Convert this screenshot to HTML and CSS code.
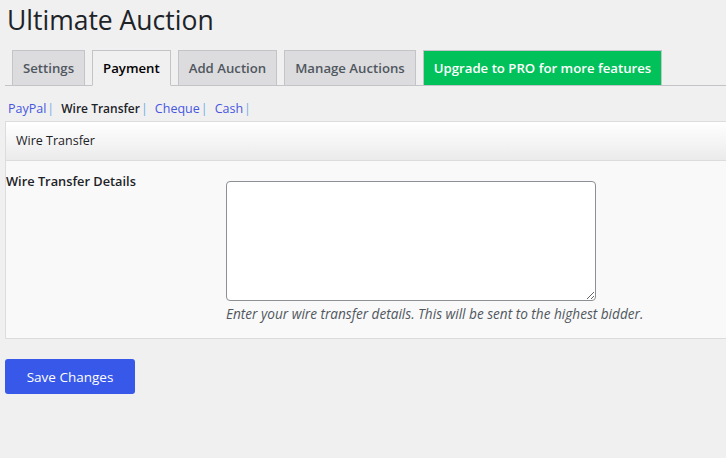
FILE: index.html
```html
<!DOCTYPE html>
<html lang="en">
<head>
<meta charset="utf-8">
<title>Ultimate Auction</title>
<link rel="stylesheet" href="styles.css">
</head>
<body>
<div class="wrap">
  <h1 class="page-title">Ultimate Auction</h1>

  <nav class="nav-tabs">
    <a class="nav-tab" href="#">Settings</a>
    <a class="nav-tab nav-tab-active" href="#">Payment</a>
    <a class="nav-tab" href="#">Add Auction</a>
    <a class="nav-tab" href="#">Manage Auctions</a>
    <a class="nav-tab nav-tab-pro" href="#">Upgrade to PRO for more features</a>
  </nav>

  <ul class="subsubsub">
    <li><a href="#">PayPal</a><span class="sep">|</span></li>
    <li><a class="current" href="#">Wire Transfer</a><span class="sep">|</span></li>
    <li><a href="#">Cheque</a><span class="sep">|</span></li>
    <li><a href="#">Cash</a><span class="sep">|</span></li>
  </ul>

  <form class="settings-form">
    <section class="panel">
      <header class="panel-head">Wire Transfer</header>
      <div class="panel-body">
        <div class="field-row">
          <label class="field-label" for="wire-details">Wire Transfer Details</label>
          <div class="field-control">
            <textarea id="wire-details" class="field-textarea"></textarea>
            <p class="field-desc">Enter your wire transfer details. This will be sent to the highest bidder.</p>
          </div>
        </div>
      </div>
    </section>

    <div class="submit-row">
      <button type="button" class="button-primary">Save Changes</button>
    </div>
  </form>
</div>
</body>
</html>
```

FILE: styles.css
```css
html {
  overflow-x: hidden;
}

body {
  margin: 0;
  background: #f0f0f1;
  color: #1d2327;
  font-family: "Open Sans", "Noto Sans", sans-serif;
  font-size: 13px;
}

.wrap {
  padding-left: 5px;
}

.page-title {
  margin: 0;
  padding: 2px 0 0 2px;
  font-size: 26.5px;
  font-weight: 400;
  line-height: 36px;
  color: #1d2327;
}

/* tab strip */
.nav-tabs {
  display: flex;
  margin-top: 12px;
  border-bottom: 1px solid #c3c4c7;
  margin-right: -5px;
}

.nav-tab {
  margin-left: 7px;
  margin-bottom: -1px;
  padding: 5px 10px;
  border: 1px solid #c3c4c7;
  background: #dcdcde;
  color: #50575e;
  font-size: 13.2px;
  font-weight: 600;
  line-height: 24px;
  text-decoration: none;
  white-space: nowrap;
}

.nav-tab-active {
  background: #f0f0f1;
  border-bottom-color: #f0f0f1;
  color: #000;
}

.nav-tab-pro {
  background: #00c15a;
  color: #fff;
  border-bottom-color: #c3c4c7;
}

/* payment method links */
.subsubsub {
  display: flex;
  margin: 0;
  padding: 12px 0 0 3px;
  list-style: none;
  font-size: 12.5px;
  line-height: 21px;
}

.subsubsub a {
  color: #4656e0;
  text-decoration: none;
}

.subsubsub a.current {
  color: #1d2327;
  font-size: 12px;
  font-weight: 600;
}

.subsubsub .sep {
  color: #72aee6;
  margin: 0 7px 0 1px;
}

/* settings panel */
.settings-form {
  margin-top: 2px;
}

.panel {
  margin-right: -30px;
  border: 1px solid #dcdcde;
  background: #f9f9f9;
}

.panel-head {
  height: 38px;
  padding: 0 10px;
  border-bottom: 1px solid #dcdcde;
  background: linear-gradient(#ffffff, #ebebeb);
  font-size: 12.5px;
  font-weight: 500;
  line-height: 37px;
  color: #1d2327;
}

.panel-body {
  padding: 11px 0 14px;
}

.field-row {
  display: flex;
}

.field-label {
  width: 220px;
  flex: none;
  font-size: 12.8px;
  font-weight: 600;
  line-height: 18px;
  color: #1d2327;
}

.field-textarea {
  display: block;
  width: 370px;
  height: 120px;
  margin: 9px 0 0;
  box-sizing: border-box;
  border: 1px solid #8c8f94;
  border-radius: 4px;
  background: #fff;
  font: inherit;
}

.field-desc {
  margin: 3px 0 0;
  font-size: 13.6px;
  font-style: italic;
  line-height: 20px;
  color: #50575e;
}

/* submit */
.submit-row {
  padding-top: 20px;
}

.button-primary {
  width: 130px;
  height: 35px;
  border: 0;
  border-radius: 3px;
  background: #3858e9;
  color: #fff;
  font-family: inherit;
  font-size: 13.5px;
  cursor: pointer;
}
```
